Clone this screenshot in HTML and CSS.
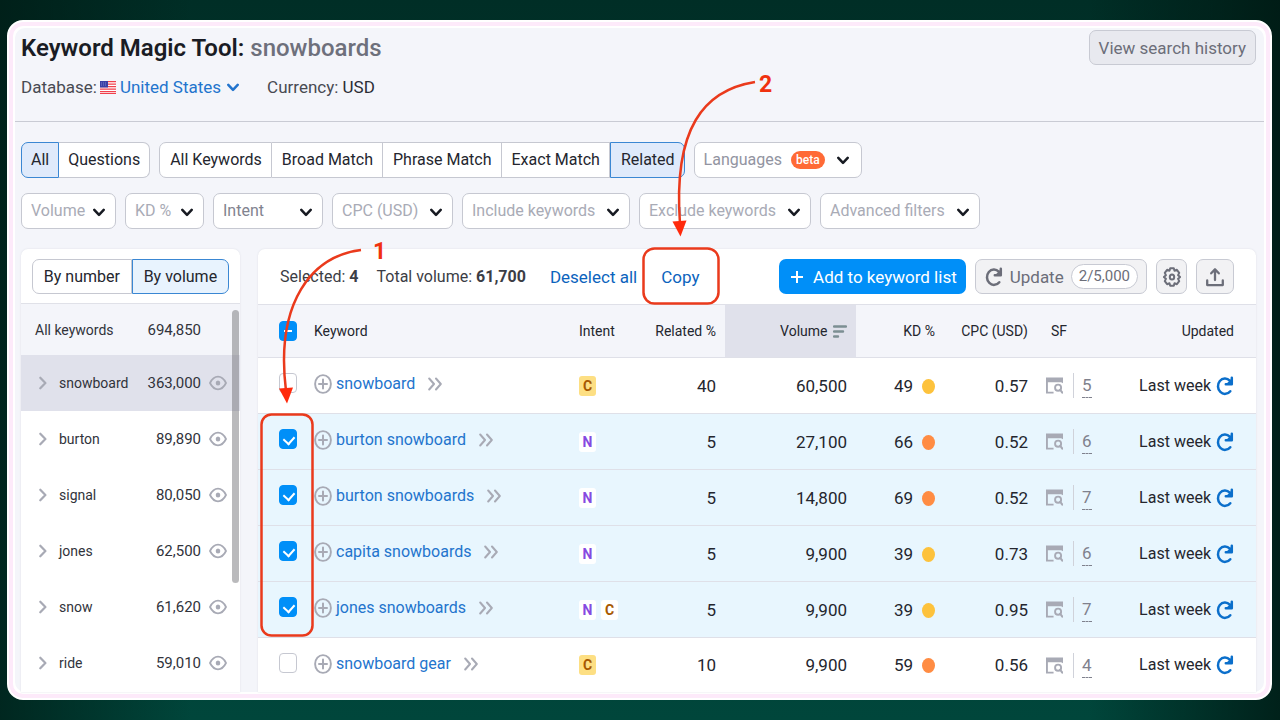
FILE: index.html
```html
<!DOCTYPE html>
<html lang="en">
<head>
<meta charset="utf-8">
<meta name="viewport" content="width=device-width, initial-scale=1">
<title>Keyword Magic Tool: snowboards</title>
<link rel="stylesheet" href="styles.css">
</head>
<body>
<svg class="sprite" aria-hidden="true">
  <symbol id="down" viewBox="0 0 12 9"><path d="M1.3 1.8 6 6.8l4.7-5" fill="none" stroke="currentColor" stroke-width="2.5" stroke-linecap="round" stroke-linejoin="round"/></symbol>
  <symbol id="right" viewBox="0 0 8 14"><path d="M1.3 1.7 6.4 7l-5.1 5.3" fill="none" stroke="currentColor" stroke-width="2.2" stroke-linecap="round" stroke-linejoin="round"/></symbol>
  <symbol id="more" viewBox="0 0 14 14"><path d="M1.2 1.5 6 7l-4.8 5.5M8 1.5 12.8 7 8 12.5" fill="none" stroke="currentColor" stroke-width="2" stroke-linecap="round" stroke-linejoin="round"/></symbol>
  <symbol id="eye" viewBox="0 0 18 16"><path d="M1 8c2-4 4.800-6.300 8-6.300S15 4 17 8c-2 4-4.800 6.300-8 6.300S3 12 1 8z" fill="none" stroke="currentColor" stroke-width="1.800" stroke-linejoin="round"/><ellipse cx="9" cy="8" rx="2.300" ry="2.500" fill="currentColor"/></symbol>
  <symbol id="add" viewBox="0 0 18 20"><ellipse cx="9" cy="10" rx="7.900" ry="8.900" fill="none" stroke="currentColor" stroke-width="1.900"/><path d="M9 5.500v9M5 10h8" stroke="currentColor" stroke-width="2" stroke-linecap="round"/></symbol>
  <symbol id="reload" viewBox="0 0 18 20"><path d="M14.300 15.200A7 7.700 0 1 1 13.800 4.600" fill="none" stroke="currentColor" stroke-width="2.500" stroke-linecap="round"/><path d="M15.800 1.800v6.400H9.800" fill="none" stroke="currentColor" stroke-width="2.500" stroke-linecap="round" stroke-linejoin="round"/><path d="M15.800 2.200v6H10z" fill="currentColor"/></symbol>
  <symbol id="serp" viewBox="0 0 18 17"><path d="M0 0h18v6l-2-1H2v10h6v2H0z" fill="currentColor"/><circle cx="12.800" cy="10.800" r="3.200" fill="none" stroke="currentColor" stroke-width="2"/><path d="m15 13 2.200 3" stroke="currentColor" stroke-width="2.200" stroke-linecap="round"/></symbol>
  <symbol id="gear" viewBox="0 0 18 20"><path d="M7.200 1.200h3.600l.7 2.500 2.400-.9 2.300 3-1.100 2.400 2 1.800-2 1.800 1.100 2.400-2.300 3-2.400-.9-.7 2.500H7.200l-.7-2.500-2.400.9-2.300-3 1.100-2.400-2-1.800 2-1.800-1.100-2.400 2.300-3 2.400.9z" fill="none" stroke="currentColor" stroke-width="2" stroke-linejoin="round"/><ellipse cx="9" cy="10" rx="2.200" ry="2.500" fill="none" stroke="currentColor" stroke-width="2"/></symbol>
  <symbol id="export" viewBox="0 0 18 19"><path d="M1.200 13v4.600h15.600V13M9 12.500V2M5.200 5.800 9 1.800l3.800 4" fill="none" stroke="currentColor" stroke-width="2.300" stroke-linecap="round" stroke-linejoin="round"/></symbol>
</svg>

<div class="frame">
  <header class="header">
    <div class="title-row">
      <h1 class="title">Keyword Magic Tool: <span class="query">snowboards</span></h1>
      <button class="btn history" type="button">View search history</button>
    </div>
    <div class="meta">
      <span>Database:</span>
      <svg class="flag" viewBox="0 0 16 13" aria-hidden="true"><path fill="#fff" d="M0 0h16v13H0z"/><path stroke="#f0404c" stroke-width="1.300" d="M0 .7h16M0 3.200h16M0 5.700h16M0 8.200h16M0 10.700h16M0 12.700h16"/><path fill="#3a3fa5" d="M0 0h8v6.500H0z"/><path stroke="#9a9ddb" stroke-width=".7" stroke-dasharray="1 1" d="M1 2h6M1 4h6"/></svg>
      <button class="country" type="button">United States <svg class="chev"><use href="#down"/></svg></button>
      <span class="currency">Currency: <span class="usd">USD</span></span>
    </div>
  </header>

  <section class="filters" aria-label="Filters">
    <div class="filter-row">
      <div class="segmented">
        <button class="seg active" type="button">All</button><button class="seg" type="button">Questions</button>
      </div>
      <div class="segmented match">
        <button class="seg" type="button">All Keywords</button><button class="seg" type="button">Broad Match</button><button class="seg" type="button">Phrase Match</button><button class="seg" type="button">Exact Match</button><button class="seg active" type="button">Related</button>
      </div>
      <button class="languages" type="button">Languages <span class="beta">beta</span><svg class="chev"><use href="#down"/></svg></button>
    </div>
    <div class="filter-row">
      <div class="drop w-volume"><select aria-label="Volume"><option>Volume</option></select><svg class="chev"><use href="#down"/></svg></div>
      <div class="drop w-kd"><select aria-label="KD %"><option>KD %</option></select><svg class="chev"><use href="#down"/></svg></div>
      <div class="drop w-intent"><select aria-label="Intent"><option>Intent</option></select><svg class="chev"><use href="#down"/></svg></div>
      <div class="drop w-cpc"><select aria-label="CPC (USD)"><option>CPC (USD)</option></select><svg class="chev"><use href="#down"/></svg></div>
      <div class="drop w-include"><select aria-label="Include keywords"><option>Include keywords</option></select><svg class="chev"><use href="#down"/></svg></div>
      <div class="drop w-exclude"><select aria-label="Exclude keywords"><option>Exclude keywords</option></select><svg class="chev"><use href="#down"/></svg></div>
      <div class="drop w-advanced"><select aria-label="Advanced filters"><option>Advanced filters</option></select><svg class="chev"><use href="#down"/></svg></div>
    </div>
  </section>

  <main class="main">
    <aside class="groups">
      <div class="groups-head">
        <div class="segmented">
          <button class="seg" type="button">By number</button><button class="seg active" type="button">By volume</button>
        </div>
      </div>
      <ul class="group-list">
        <li class="group all"><span>All keywords</span><span class="count">694,850</span><span class="eye"></span></li>
        <li class="group current"><svg class="arrow"><use href="#right"/></svg><span>snowboard</span><span class="count">363,000</span><svg class="eye"><use href="#eye"/></svg></li>
        <li class="group"><svg class="arrow"><use href="#right"/></svg><span>burton</span><span class="count">89,890</span><svg class="eye"><use href="#eye"/></svg></li>
        <li class="group"><svg class="arrow"><use href="#right"/></svg><span>signal</span><span class="count">80,050</span><svg class="eye"><use href="#eye"/></svg></li>
        <li class="group"><svg class="arrow"><use href="#right"/></svg><span>jones</span><span class="count">62,500</span><svg class="eye"><use href="#eye"/></svg></li>
        <li class="group"><svg class="arrow"><use href="#right"/></svg><span>snow</span><span class="count">61,620</span><svg class="eye"><use href="#eye"/></svg></li>
        <li class="group"><svg class="arrow"><use href="#right"/></svg><span>ride</span><span class="count">59,010</span><svg class="eye"><use href="#eye"/></svg></li>
      </ul>
      <div class="scrollbar"></div>
    </aside>

    <section class="results">
      <div class="toolbar">
        <span>Selected: <b>4</b></span>
        <span class="total">Total volume: <b>61,700</b></span>
        <button class="text-btn" type="button">Deselect all</button>
        <button class="text-btn copy" type="button">Copy</button>
        <div class="actions">
          <button class="primary" type="button"><svg class="plus" viewBox="0 0 12 12"><path d="M6 0v12M0 6h12" stroke="#fff" stroke-width="2"/></svg>Add to keyword list</button>
          <button class="btn update" type="button"><svg class="reload"><use href="#reload"/></svg>Update<span class="quota">2/5,000</span></button>
          <button class="btn settings" type="button" aria-label="Settings"><svg class="gear"><use href="#gear"/></svg></button>
          <button class="btn export" type="button" aria-label="Export"><svg class="gear"><use href="#export"/></svg></button>
        </div>
      </div>
      <table class="table">
        <thead>
          <tr>
            <th class="c-check"><input class="check partial" type="checkbox" aria-label="Select all"></th>
            <th class="c-key">Keyword</th>
            <th class="c-intent">Intent</th>
            <th class="c-rel num">Related %</th>
            <th class="c-vol num">Volume <svg class="sort" viewBox="0 0 14 13"><path d="M1 1.500h12M1 6.500h9M1 11.500h4" stroke="#7c8f93" stroke-width="2.400" stroke-linecap="round"/></svg></th>
            <th class="c-kd num">KD %</th>
            <th class="c-cpc num">CPC (USD)</th>
            <th class="c-sf">SF</th>
            <th class="c-upd num">Updated</th>
          </tr>
        </thead>
        <tbody>
          <tr>
            <td><input class="check" type="checkbox" aria-label="Select snowboard"></td>
            <td class="key-cell"><div class="key"><svg class="add"><use href="#add"/></svg><a href="#">snowboard</a><svg class="more"><use href="#more"/></svg></div></td>
            <td><div class="tags"><span class="tag c">C</span></div></td>
            <td class="num">40</td><td class="num">60,500</td>
            <td class="num">49<i class="dot yellow"></i></td><td class="num">0.57</td>
            <td><div class="sf"><svg class="serp"><use href="#serp"/></svg><span class="sf-count"><span>5</span></span></div></td>
            <td class="num"><div class="updated">Last week<svg class="reload"><use href="#reload"/></svg></div></td>
          </tr>
          <tr class="selected">
            <td><input class="check" type="checkbox" checked aria-label="Select burton snowboard"></td>
            <td class="key-cell"><div class="key"><svg class="add"><use href="#add"/></svg><a href="#">burton snowboard</a><svg class="more"><use href="#more"/></svg></div></td>
            <td><div class="tags"><span class="tag n">N</span></div></td>
            <td class="num">5</td><td class="num">27,100</td>
            <td class="num">66<i class="dot orange"></i></td><td class="num">0.52</td>
            <td><div class="sf"><svg class="serp"><use href="#serp"/></svg><span class="sf-count"><span>6</span></span></div></td>
            <td class="num"><div class="updated">Last week<svg class="reload"><use href="#reload"/></svg></div></td>
          </tr>
          <tr class="selected">
            <td><input class="check" type="checkbox" checked aria-label="Select burton snowboards"></td>
            <td class="key-cell"><div class="key"><svg class="add"><use href="#add"/></svg><a href="#">burton snowboards</a><svg class="more"><use href="#more"/></svg></div></td>
            <td><div class="tags"><span class="tag n">N</span></div></td>
            <td class="num">5</td><td class="num">14,800</td>
            <td class="num">69<i class="dot orange"></i></td><td class="num">0.52</td>
            <td><div class="sf"><svg class="serp"><use href="#serp"/></svg><span class="sf-count"><span>7</span></span></div></td>
            <td class="num"><div class="updated">Last week<svg class="reload"><use href="#reload"/></svg></div></td>
          </tr>
          <tr class="selected">
            <td><input class="check" type="checkbox" checked aria-label="Select capita snowboards"></td>
            <td class="key-cell"><div class="key"><svg class="add"><use href="#add"/></svg><a href="#">capita snowboards</a><svg class="more"><use href="#more"/></svg></div></td>
            <td><div class="tags"><span class="tag n">N</span></div></td>
            <td class="num">5</td><td class="num">9,900</td>
            <td class="num">39<i class="dot yellow"></i></td><td class="num">0.73</td>
            <td><div class="sf"><svg class="serp"><use href="#serp"/></svg><span class="sf-count"><span>6</span></span></div></td>
            <td class="num"><div class="updated">Last week<svg class="reload"><use href="#reload"/></svg></div></td>
          </tr>
          <tr class="selected">
            <td><input class="check" type="checkbox" checked aria-label="Select jones snowboards"></td>
            <td class="key-cell"><div class="key"><svg class="add"><use href="#add"/></svg><a href="#">jones snowboards</a><svg class="more"><use href="#more"/></svg></div></td>
            <td><div class="tags"><span class="tag n">N</span><span class="tag c">C</span></div></td>
            <td class="num">5</td><td class="num">9,900</td>
            <td class="num">39<i class="dot yellow"></i></td><td class="num">0.95</td>
            <td><div class="sf"><svg class="serp"><use href="#serp"/></svg><span class="sf-count"><span>7</span></span></div></td>
            <td class="num"><div class="updated">Last week<svg class="reload"><use href="#reload"/></svg></div></td>
          </tr>
          <tr>
            <td><input class="check" type="checkbox" aria-label="Select snowboard gear"></td>
            <td class="key-cell"><div class="key"><svg class="add"><use href="#add"/></svg><a href="#">snowboard gear</a><svg class="more"><use href="#more"/></svg></div></td>
            <td><div class="tags"><span class="tag c">C</span></div></td>
            <td class="num">10</td><td class="num">9,900</td>
            <td class="num">59<i class="dot orange"></i></td><td class="num">0.56</td>
            <td><div class="sf"><svg class="serp"><use href="#serp"/></svg><span class="sf-count"><span>4</span></span></div></td>
            <td class="num"><div class="updated">Last week<svg class="reload"><use href="#reload"/></svg></div></td>
          </tr>
        </tbody>
      </table>
    </section>
  </main>
</div>

<svg class="notes" width="1280" height="720" viewBox="0 0 1280 720">
  <g fill="none" stroke="#ea3a1c" stroke-width="2.500">
    <path d="M361 250C312 256 275 302 286 391"/>
    <path d="M755 82C704 90 673 128 680 224"/>
    <rect x="261.500" y="414.500" width="51" height="221" rx="10"/>
    <rect x="643.500" y="248.500" width="75" height="55" rx="11"/>
  </g>
  <g fill="#ff2a0c">
    <path d="M279 388.500 293 387.500 287 403.500z"/>
    <path d="M672.500 221.500 686.500 220.500 680.500 236.500z"/>
  </g>
  <text class="note" x="373" y="259">1</text>
  <text class="note" x="759" y="92">2</text>
</svg>
</body>
</html>
```

FILE: styles.css
```css
* { box-sizing: border-box; }

body {
  position: relative;
  margin: 0;
  min-height: 100vh;
  padding: 20px 8px 20px 7px;
  font: 17px/20px Roboto, "Liberation Sans", sans-serif;
  color: #24262e;
  background:
    linear-gradient(90deg, rgba(0, 26, 20, 0.7), transparent 15%, transparent 85%, rgba(0, 24, 18, 0.8)),
    linear-gradient(180deg, #002e26, #00463b);
}

button, select { font: inherit; color: inherit; cursor: pointer; }
button { display: flex; align-items: center; justify-content: center; white-space: nowrap; }
.sprite { position: absolute; width: 0; height: 0; }

.frame {
  padding: 6px;
  border: 2px solid #fff;
  border-radius: 16px;
  background: #fff;
  box-shadow: inset 0 0 0 4px #fdeafa;
}
.frame > * { background: #f4f5fa; }

/* Header */
.header { padding: 2px 8px 22px 6px; border-bottom: 1px solid #c9cbd4; border-radius: 10px 10px 0 0; }
.title-row { display: flex; justify-content: space-between; align-items: center; }
.title { margin: 0; font-size: 24px; line-height: 30px; font-weight: 600; color: #1a1c24; }
.query { color: #6e707c; font-weight: 500; }
.btn { height: 35px; border: 1px solid #c8cad3; border-radius: 7px; background: #f2f2f4; color: #6c6e79; }
.history { padding: 0 9px; background: #e8e9ef; }
.meta { display: flex; align-items: center; margin-top: 10px; height: 24px; color: #484a52; }
.flag { width: 16px; height: 13px; margin: 0 4px 0 3px; }
.chev { width: 12px; height: 9px; flex: none; }
.country { padding: 0; border: 0; background: none; color: #2374cd; gap: 6px; }
.currency { margin-left: 28px; }
.usd { color: #2b2d35; }

/* Filters */
.filters { display: flex; flex-direction: column; gap: 15px; padding: 20px 8px 20px 6px; }
.filter-row { display: flex; gap: 9px; }
.segmented { display: flex; font-size: 16px; }
.seg { height: 36px; padding: 0 9px; border: 1px solid #c6c8d1; border-left-width: 0; background: #fff; }
.match .seg { padding: 0 9px 0 10px; }
.seg:first-child { border-left-width: 1px; border-radius: 7px 0 0 7px; }
.seg:last-child { border-radius: 0 7px 7px 0; }
.seg.active { border: 1px solid #3a87d3; background: #dfeafb; }
.languages { height: 36px; padding: 0 12px 0 9px; border: 1px solid #c6c8d1; border-radius: 7px; background: #fff; color: #9294a1; font-size: 16px; }
.languages .chev, .drop .chev { color: #171a22; }
.beta { margin: 0 12px 0 9px; padding: 0 5px; border-radius: 9px; background: #ff6a36; color: #fff; font-size: 12px; line-height: 18px; font-weight: 500; }
.drop { position: relative; height: 36px; border: 1px solid #c6c8d1; border-radius: 7px; background: #fff; color: #a9abb6; font-size: 16px; }
.drop select { width: 100%; height: 100%; padding: 0 0 0 9px; border: 0; background: none; appearance: none; }
.drop .chev { position: absolute; right: 10px; top: 14px; pointer-events: none; }
.w-volume { width: 95px; }
.w-kd { width: 79px; }
.w-intent { width: 110px; color: #81838f; }
.w-cpc { width: 121px; }
.w-include { width: 168px; }
.w-exclude { width: 172px; }
.w-advanced { width: 160px; }

/* Groups */
.main { display: flex; gap: 18px; padding: 0 8px 0 6px; border-radius: 0 0 10px 10px; }
.groups { position: relative; flex: none; width: 219px; border-radius: 7px 7px 0 0; background: #fff; box-shadow: 0 0 2px #dcdde5; }
.groups-head { padding: 10px 11px; height: 55px; border-bottom: 1px solid #e0e1e8; }
.groups-head .seg { flex: 1 1 auto; height: 35px; }
.groups-head .active { background: #e8f3fe; }
.group-list { margin: 0; padding: 0; list-style: none; font-size: 14px; }
.group { display: flex; align-items: center; height: 56px; padding: 0 13px 0 18px; color: #31333b; }
.all { height: 51px; padding-left: 14px; background: #f4f5fa; }
.current { background: #e0e1eb; }
.arrow { width: 8px; height: 14px; margin-right: 12px; color: #a8aab5; }
.count { margin-left: auto; font-size: 15px; }
.eye { width: 18px; height: 16px; margin-left: 8px; color: #a8aab5; }
.scrollbar { position: absolute; top: 61px; right: 1px; width: 7px; height: 273px; border-radius: 4px; background: rgba(110, 110, 115, 0.48); }

/* Results */
.results { flex: 1; min-width: 0; border-radius: 7px 7px 0 0; background: #fff; box-shadow: 0 0 2px #dcdde5; }
.toolbar { display: flex; align-items: center; height: 55px; padding: 0 22px; color: #3b3d45; font-size: 16px; }
.toolbar button { font-size: 17px; }
.total { margin-left: 18px; }
.text-btn { margin-left: 24px; padding: 0; border: 0; background: none; color: #0b63bd; }
.actions { display: flex; gap: 9px; margin-left: auto; }
.primary { height: 35px; padding: 0 9px 0 12px; gap: 10px; border: 0; border-radius: 7px; background: #008ff8; color: #fff; }
.plus { width: 12px; height: 12px; }
.reload { width: 18px; height: 20px; flex: none; }
.update { padding: 0 8px 0 9px; gap: 7px; }
.toolbar .quota { padding: 0 7px; border: 1px solid #c8cad3; border-radius: 13px; background: #fff; font-size: 15px; line-height: 23px; }
.settings { width: 31px; padding: 0; }
.export { width: 38px; padding: 0; }
.gear { width: 18px; height: 20px; }

.table { width: 100%; table-layout: fixed; border-collapse: separate; border-spacing: 0; }
.table th { height: 54px; padding: 0 9px; border: solid #dfe0e8; border-width: 1px 0; background: #f4f5fa; font-size: 14px; font-weight: 400; text-align: left; white-space: nowrap; }
.table td { height: 56px; padding: 0 9px; border-bottom: 1px solid #dfe0e8; }
.table tr:last-child td { height: 54px; border-bottom: 0; }
.table .num { text-align: right; }
.table .c-vol { background: #e0e1eb; }
.table .c-sf { padding-left: 14px; }
.table tr > :first-child { padding: 0 0 0 21px; }
.table td:first-child { padding-bottom: 5px; }
.table .key-cell { padding-bottom: 3px; }
.table tr > :last-child { padding-right: 22px; }
.selected { background: #e8f6fe; }
.c-check { width: 47px; }
.c-intent { width: 75px; }
.c-rel { width: 80px; }
.c-vol { width: 131px; }
.c-kd { width: 88px; }
.c-cpc { width: 93px; }
.c-sf { width: 80px; }
.c-upd { width: 139px; }
.sort { width: 14px; height: 13px; margin-left: 2px; vertical-align: -2px; }

.check { display: block; position: relative; appearance: none; width: 18px; height: 20px; margin: 0; border: 1px solid #c6c8d1; border-radius: 4px; background: #fff; }
.check:checked, .check.partial { border-color: #008ff8; background: #008ff8; }
.check:checked::after { content: ""; position: absolute; left: 5px; top: 4px; width: 6px; height: 8px; border: solid #fff; border-width: 0 2px 2px 0; rotate: 42deg; }
.check.partial::after { content: ""; position: absolute; left: 4px; top: 8px; width: 8px; height: 2px; background: #fff; }
.key { display: flex; align-items: center; white-space: nowrap; font-size: 16px; }
.key a { color: #2374cd; text-decoration: none; }
.add { width: 18px; height: 20px; margin-right: 4px; color: #a8aab5; }
.more { width: 14px; height: 14px; margin-left: 13px; color: #a8aab5; }
.tags { display: flex; gap: 5px; }
.tag { width: 17px; border-radius: 3px; background: #fff; font-size: 14px; line-height: 20px; font-weight: 700; text-align: center; }
.tag.c { color: #a75800; background: #fddf83; }
.selected .tag.c { background: #fff; }
.tag.n { color: #8649e1; }
.dot { display: inline-block; width: 13px; height: 15px; margin-left: 9px; border-radius: 50%; vertical-align: -2px; }
.yellow { background: #fdc23c; }
.orange { background: #ff8c43; }
.sf { display: flex; align-items: center; color: #7f818d; }
.serp { width: 17px; height: 17px; color: #a8aab5; }
.sf-count { margin-left: 10px; padding-left: 8px; border-left: 1px solid #d0d2da; line-height: 24px; }
.sf-count span { display: block; border-bottom: 1px dashed #7f818d; }
.updated { display: flex; justify-content: flex-end; align-items: center; gap: 5px; white-space: nowrap; font-size: 16px; }
.updated .reload { color: #0b6fcb; }

/* Annotations */
.notes { position: absolute; left: 0; top: 0; pointer-events: none; }
.note { fill: #f0310f; font: 700 23px Roboto, "Liberation Sans", sans-serif; }
```
